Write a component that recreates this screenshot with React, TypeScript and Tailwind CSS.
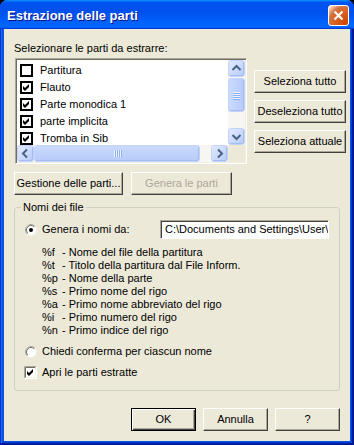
import React from "react";

const parts = [
  { name: "Partitura", checked: false },
  { name: "Flauto", checked: true },
  { name: "Parte monodica 1", checked: true },
  { name: "parte implicita", checked: true },
  { name: "Tromba in Sib", checked: true },
];

const tokens = [
  ["%f", "- Nome del file della partitura"],
  ["%t", "- Titolo della partitura dal File Inform."],
  ["%p", "- Nome della parte"],
  ["%s", "- Primo nome del rigo"],
  ["%a", "- Primo nome abbreviato del rigo"],
  ["%i", "- Primo numero del rigo"],
  ["%n", "- Primo indice del rigo"],
];

function Button({
  label,
  className = "",
  disabled = false,
  primary = false,
}: {
  label: string;
  className?: string;
  disabled?: boolean;
  primary?: boolean;
}) {
  const frame = primary
    ? "border border-black shadow-[inset_1px_1px_#fff,inset_-1px_-1px_#404040,inset_-2px_-2px_#aca899]"
    : "border border-t-white border-l-white border-r-[#404040] border-b-[#404040] shadow-[inset_-1px_-1px_#aca899]";
  return (
    <div
      className={`${frame} flex h-[23px] items-center justify-center whitespace-nowrap bg-[#ECE9D8] text-[11px] ${
        disabled ? "text-[#ACA899]" : "text-black"
      } ${className}`}
    >
      {label}
    </div>
  );
}

// checkbox con bordo nero spesso (dentro la lista)
function ListCheck({ checked }: { checked: boolean }) {
  return (
    <svg width="13" height="13" viewBox="0 0 13 13" className="shrink-0">
      <rect x="1" y="1" width="11" height="11" fill="#fff" stroke="#000" strokeWidth="2" />
      {checked && <polygon points="3,5 5,7 9,3 9,6 5,10 3,8" fill="#000" />}
    </svg>
  );
}

// checkbox 3D classica
function Check3D({ checked }: { checked: boolean }) {
  return (
    <svg width="13" height="13" viewBox="0 0 13 13" className="shrink-0">
      <rect x="0" y="0" width="13" height="13" fill="#fff" />
      <path d="M0.5 12.5V0.5H12.5" stroke="#ACA899" fill="none" />
      <path d="M1.5 11.5V1.5H11.5" stroke="#716F64" fill="none" />
      <path d="M0.5 12.5H12.5V0.5" stroke="#fff" fill="none" />
      <path d="M1.5 11.5H11.5V1.5" stroke="#F1EFE2" fill="none" />
      {checked && <polygon points="3,5 5,7 9,3 9,6 5,10 3,8" fill="#000" />}
    </svg>
  );
}

function Radio({ checked }: { checked: boolean }) {
  return (
    <svg width="12" height="12" viewBox="0 0 12 12" className="shrink-0">
      <circle cx="6" cy="6" r="5.5" fill="#fff" stroke="#F1EFE2" />
      <path d="M2.1 9.9A5.5 5.5 0 0 1 9.9 2.1" stroke="#ACA899" fill="none" />
      <path d="M2.8 9.2A4.5 4.5 0 0 1 9.2 2.8" stroke="#716F64" fill="none" />
      {checked && <circle cx="6" cy="6" r="2" fill="#000" />}
    </svg>
  );
}

function Chevron({ dir }: { dir: "up" | "down" | "left" | "right" }) {
  const d = {
    up: "M4.5 10L8.5 6L12.5 10",
    down: "M4.5 7L8.5 11L12.5 7",
    left: "M10 4.5L6 8.5L10 12.5",
    right: "M7 4.5L11 8.5L7 12.5",
  }[dir];
  return (
    <svg width="17" height="17" viewBox="0 0 17 17">
      <path d={d} stroke="#4D6185" strokeWidth="2" fill="none" />
    </svg>
  );
}

function ScrollBtn({ dir }: { dir: "up" | "down" | "left" | "right" }) {
  return (
    <div className="h-[17px] w-[17px] shrink-0 rounded-[3px] border border-[#C3D3FD] bg-[linear-gradient(135deg,#E1EAFE,#B8CCF9)] shadow-[inset_-1px_-1px_#A6BDF4]">
      <div className="-m-px">
        <Chevron dir={dir} />
      </div>
    </div>
  );
}

export default function App() {
  return (
    <div className="h-[445px] w-[354px] bg-black font-['Liberation_Sans',Arial,sans-serif]">
      <div className="flex h-[445px] w-[354px] flex-col rounded-t-[8px] bg-[#ECE9D8] shadow-[inset_-1px_-1px_#00138c,inset_1px_1px_#0831d9,inset_-2px_-2px_#001ea0,inset_2px_2px_#166aee,inset_-3px_-3px_#003bda,inset_3px_3px_#0855dd,inset_-4px_-4px_#0855dd,inset_4px_4px_#0855dd]">
        {/* barra del titolo */}
        <div className="flex h-[29px] shrink-0 items-center justify-between rounded-t-[8px] bg-[linear-gradient(180deg,#0997ff,#0053ee_8%,#0050ee_40%,#06f_88%,#06f_93%,#005bff_95%,#003dd7_96%,#003dd7)] pl-[7px] pr-[5px] pt-[2px]">
          <span className="text-[13px] font-bold text-white [text-shadow:1px_1px_#0f1089]">
            Estrazione delle parti
          </span>
          <div className="flex h-[21px] w-[21px] items-center justify-center rounded-[3px] border border-white bg-[radial-gradient(circle_at_90%_90%,#cc4600_0%,#dc6527_55%,#cd7546_70%,#ffccb2_90%,#fff_100%)]">
            <svg width="11" height="11" viewBox="0 0 11 11">
              <path d="M1.5 1.5L9.5 9.5M9.5 1.5L1.5 9.5" stroke="#fff" strokeWidth="2.2" />
            </svg>
          </div>
        </div>

        <div className="flex flex-col px-[14px] pt-[12px] text-[11px] text-black">
          {/* lista parti + pulsanti */}
          <div className="flex">
            <div className="flex w-[233px] flex-col">
              <div className="h-[14px] leading-[14px]">Selezionare le parti da estrarre:</div>
              <div className="ml-px mt-[3px] flex h-[106px] w-[232px] flex-col border border-t-[#ACA899] border-l-[#ACA899] border-r-white border-b-white shadow-[inset_1px_1px_#716F64,inset_-1px_-1px_#F1EFE2] p-px">
                <div className="flex h-[85px]">
                  <div className="flex flex-1 flex-col overflow-hidden bg-white pt-[2px]">
                    {parts.map((p) => (
                      <div key={p.name} className="flex h-[17px] shrink-0 items-center gap-[7px] pl-[3px]">
                        <ListCheck checked={p.checked} />
                        <span>{p.name}</span>
                      </div>
                    ))}
                  </div>
                  <div className="flex w-[17px] flex-col bg-[#F7F6F1]">
                    <ScrollBtn dir="up" />
                    <div className="mt-px flex h-[34px] items-center justify-center rounded-[3px] border border-[#C3D3FD] bg-[linear-gradient(90deg,#C9DAFD,#B7CBF9)] shadow-[inset_-1px_-1px_#A6BDF4]">
                      <div className="flex flex-col gap-px">
                        {[0, 1, 2, 3].map((i) => (
                          <div key={i} className="h-px w-[7px] bg-[#EEF4FE] shadow-[0_1px_#8CB0F8]" />
                        ))}
                      </div>
                    </div>
                    <div className="flex-1" />
                    <ScrollBtn dir="down" />
                  </div>
                </div>
                <div className="flex h-[17px]">
                  <div className="flex w-[211px] bg-[#F7F6F1]">
                    <ScrollBtn dir="left" />
                    <div className="flex h-[17px] w-[166px] items-center justify-center rounded-[3px] border border-[#C3D3FD] bg-[linear-gradient(180deg,#C9DAFD,#B7CBF9)] shadow-[inset_-1px_-1px_#A6BDF4]">
                      <div className="flex gap-px">
                        {[0, 1, 2, 3].map((i) => (
                          <div key={i} className="h-[7px] w-px bg-[#EEF4FE] shadow-[1px_0_#8CB0F8]" />
                        ))}
                      </div>
                    </div>
                    <div className="flex-1" />
                    <ScrollBtn dir="right" />
                  </div>
                  <div className="flex-1 bg-[#ECE9D8]" />
                </div>
              </div>
            </div>
            <div className="ml-[7px] mt-[29px] flex w-[92px] shrink-0 flex-col gap-[7px]">
              <Button label="Seleziona tutto" className="w-[92px]" />
              <Button label="Deseleziona tutto" className="w-[92px]" />
              <Button label="Seleziona attuale" className="w-[92px]" />
            </div>
          </div>

          <div className="mt-[8px] flex gap-[8px]">
            <Button label="Gestione delle parti..." className="w-[109px]" />
            <Button label="Genera le parti" className="w-[101px]" disabled />
          </div>

          {/* gruppo nomi dei file */}
          <div className="relative mt-[12px] h-[184px] rounded-[3px] border border-[#D0D0BF] pl-[10px] pr-[10px] pt-[12px]">
            <span className="absolute left-[6px] top-[-8px] bg-[#ECE9D8] px-[2px] leading-[14px]">
              Nomi dei file
            </span>
            <div className="flex h-[19px] items-center">
              <Radio checked />
              <span className="ml-[5px]">Genera i nomi da:</span>
              <div className="flex-1" />
              <div className="flex h-[19px] w-[169px] items-center overflow-hidden whitespace-nowrap border border-t-[#ACA899] border-l-[#ACA899] border-r-white border-b-white bg-white pl-[4px] shadow-[inset_1px_1px_#404040]">
                C:\Documents and Settings\User\
              </div>
            </div>
            <div className="ml-[17px] mt-[7px] grid grid-cols-[20px_1fr] leading-[13px]">
              {tokens.map(([k, v]) => (
                <React.Fragment key={k}>
                  <span>{k}</span>
                  <span>{v}</span>
                </React.Fragment>
              ))}
            </div>
            <div className="mt-[8px] flex h-[13px] items-center">
              <Radio checked={false} />
              <span className="ml-[5px]">Chiedi conferma per ciascun nome</span>
            </div>
            <div className="mt-[8px] flex h-[13px] items-center">
              <div className="-ml-px">
                <Check3D checked />
              </div>
              <span className="ml-[5px]">Apri le parti estratte</span>
            </div>
          </div>

          <div className="mt-[17px] flex justify-end gap-[7px]">
            <Button label="OK" className="w-[65px]" primary />
            <Button label="Annulla" className="w-[65px]" />
            <Button label="?" className="w-[65px]" />
          </div>
        </div>
      </div>
    </div>
  );
}
